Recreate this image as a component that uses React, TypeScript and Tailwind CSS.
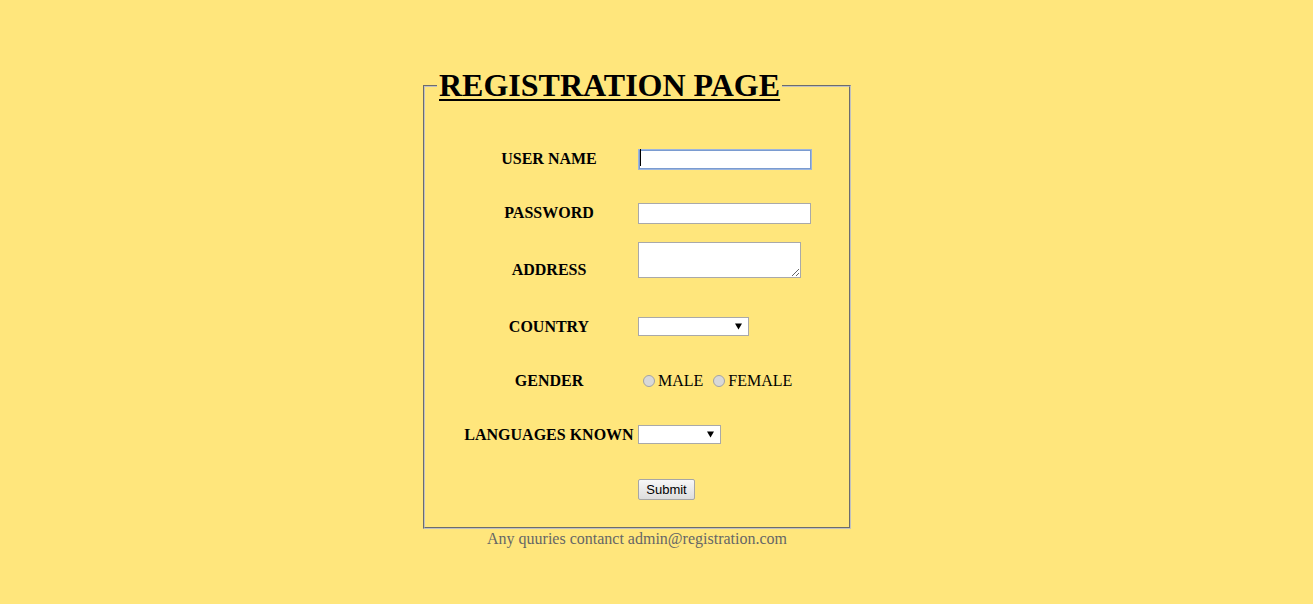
import { ReactNode } from 'react'

function Row({ label, h, children, align = 'center' }: { label: string; h: string; children?: ReactNode; align?: 'center' | 'start' }) {
  return (
    <div className={`flex ${h} items-center`}>
      <div className="w-[174px] mr-[2px] text-center font-bold text-[16px] leading-[18px]">{label}</div>
      <div className={`flex ${align === 'start' ? 'self-start' : ''}`}>{children}</div>
    </div>
  )
}

function Select({ w }: { w: string }) {
  return (
    <div className={`relative ${w} h-[19px]`}>
      <select className="appearance-none w-full h-full bg-white border border-[#a9a9a9] outline-none" />
      <svg className="absolute right-[7px] top-[6px] pointer-events-none" width="7" height="7" viewBox="0 0 7 7">
        <path d="M0 0.5 H7 L3.5 6.5 Z" fill="#000" />
      </svg>
    </div>
  )
}

export default function App() {
  return (
    <div className="min-h-screen bg-[#ffe67c] text-black pt-[67px] font-['Liberation_Serif','Times_New_Roman',serif]">
      <div className="ml-[423px] w-[428px]">
        <fieldset className="border-2 [border-style:groove] border-[#c0c0c0] px-[12px] pb-[10px]">
          <legend className="px-[2px]">
            <h1 className="text-[32px] leading-[37px] font-bold underline decoration-[2px] underline-offset-[3px]">REGISTRATION PAGE</h1>
          </legend>

          {/* form rows */}
          <div className="ml-[25px] pt-[28px]">
            <Row label="USER NAME" h="h-[54px]">
              <div className="relative">
                <input type="text" className="w-[174px] h-[21px] bg-white border border-[#9cb5de] shadow-[inset_0_0_0_1px_#7a9bd0] outline-none" />
                <span className="absolute left-[2px] top-[2px] w-[1px] h-[17px] bg-black" />
              </div>
            </Row>
            <Row label="PASSWORD" h="h-[54px]">
              <input type="password" className="w-[173px] h-[21px] bg-white border border-[#a9a9a9] outline-none" />
            </Row>
            <div className="flex h-[59px] items-center">
              <div className="w-[174px] mr-[2px] text-center font-bold text-[16px] leading-[18px]">ADDRESS</div>
              <textarea className="self-start mt-[2px] w-[163px] h-[36px] bg-white border border-[#a9a9a9] outline-none" />
            </div>
            <Row label="COUNTRY" h="h-[55px]">
              <Select w="w-[111px]" />
            </Row>
            <Row label="GENDER" h="h-[53px]">
              <label className="flex items-center text-[16px] leading-[18px]">
                <input type="radio" name="g" className="appearance-none w-[12px] h-[12px] ml-[5px] mr-[3px] rounded-full border border-[#a3a3a3] bg-[#d8d8d8]" />
                MALE
              </label>
              <label className="flex items-center text-[16px] leading-[18px] ml-[5px]">
                <input type="radio" name="g" className="appearance-none w-[12px] h-[12px] ml-[5px] mr-[3px] rounded-full border border-[#a3a3a3] bg-[#d8d8d8]" />
                FEMALE
              </label>
            </Row>
            <Row label="LANGUAGES KNOWN" h="h-[55px]">
              <Select w="w-[83px]" />
            </Row>
            <Row label="" h="h-[55px]">
              <button className="w-[57px] h-[21px] rounded-[2px] border border-[#a6a6a6] bg-gradient-to-b from-[#f7f7f7] to-[#dddddd] text-[13px] font-['Liberation_Sans',Arial,sans-serif]">
                Submit
              </button>
            </Row>
          </div>
        </fieldset>
        <p className="text-center text-[16px] leading-[18px] text-[#666666] mt-[1px]">Any quuries contanct admin@registration.com</p>
      </div>
    </div>
  )
}
